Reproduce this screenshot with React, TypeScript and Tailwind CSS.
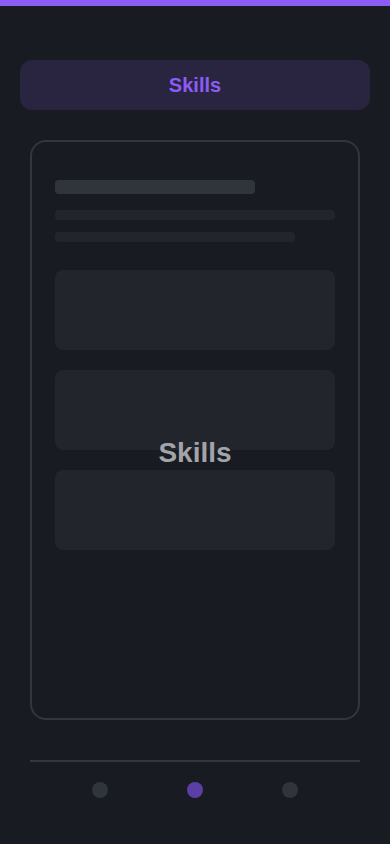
import React from 'react';

const blocks = [0, 1, 2];
const dots = [false, true, false];

export default function App() {
  return (
    <div className="min-h-[844px] w-full bg-[#181b22] font-['Liberation_Sans',Arial,sans-serif]">
      <div className="h-[6px] bg-[#8b5cf6]" />

      <div className="px-5 pt-[54px]">
        <div className="h-[50px] rounded-xl bg-[#29243f] flex items-center justify-center">
          <span className="text-[20px] font-bold text-[#8b5cf6]">Skills</span>
        </div>
      </div>

      <div className="px-[30px] pt-[30px]">
        <div className="relative h-[580px] rounded-2xl border-2 border-[#33363d] px-[23px] pt-[38px]">
          <div className="h-[14px] w-[200px] rounded bg-[#30353c]" />
          <div className="mt-4 h-[10px] w-[280px] rounded bg-[#22252c]" />
          <div className="mt-3 h-[10px] w-[240px] rounded bg-[#22252c]" />

          <div className="mt-7 flex flex-col gap-5">
            {blocks.map(b => (
              <div key={b} className="h-[80px] w-[280px] rounded-lg bg-[#22252c]" />
            ))}
          </div>

          <div className="absolute inset-x-0 top-[295px] flex justify-center">
            <span className="text-[28px] leading-8 font-bold text-[#a3a4a9]">Skills</span>
          </div>
        </div>
      </div>

      <div className="px-[30px] pt-10">
        <div className="h-[2px] bg-[#33363d]" />
        <div className="mt-5 flex justify-center gap-[79px]">
          {dots.map((active, i) => (
            <div
              key={i}
              className={active ? 'h-4 w-4 rounded-full bg-[#5b3fa6]' : 'h-4 w-4 rounded-full bg-[#30343b]'}
            />
          ))}
        </div>
      </div>
    </div>
  );
}
